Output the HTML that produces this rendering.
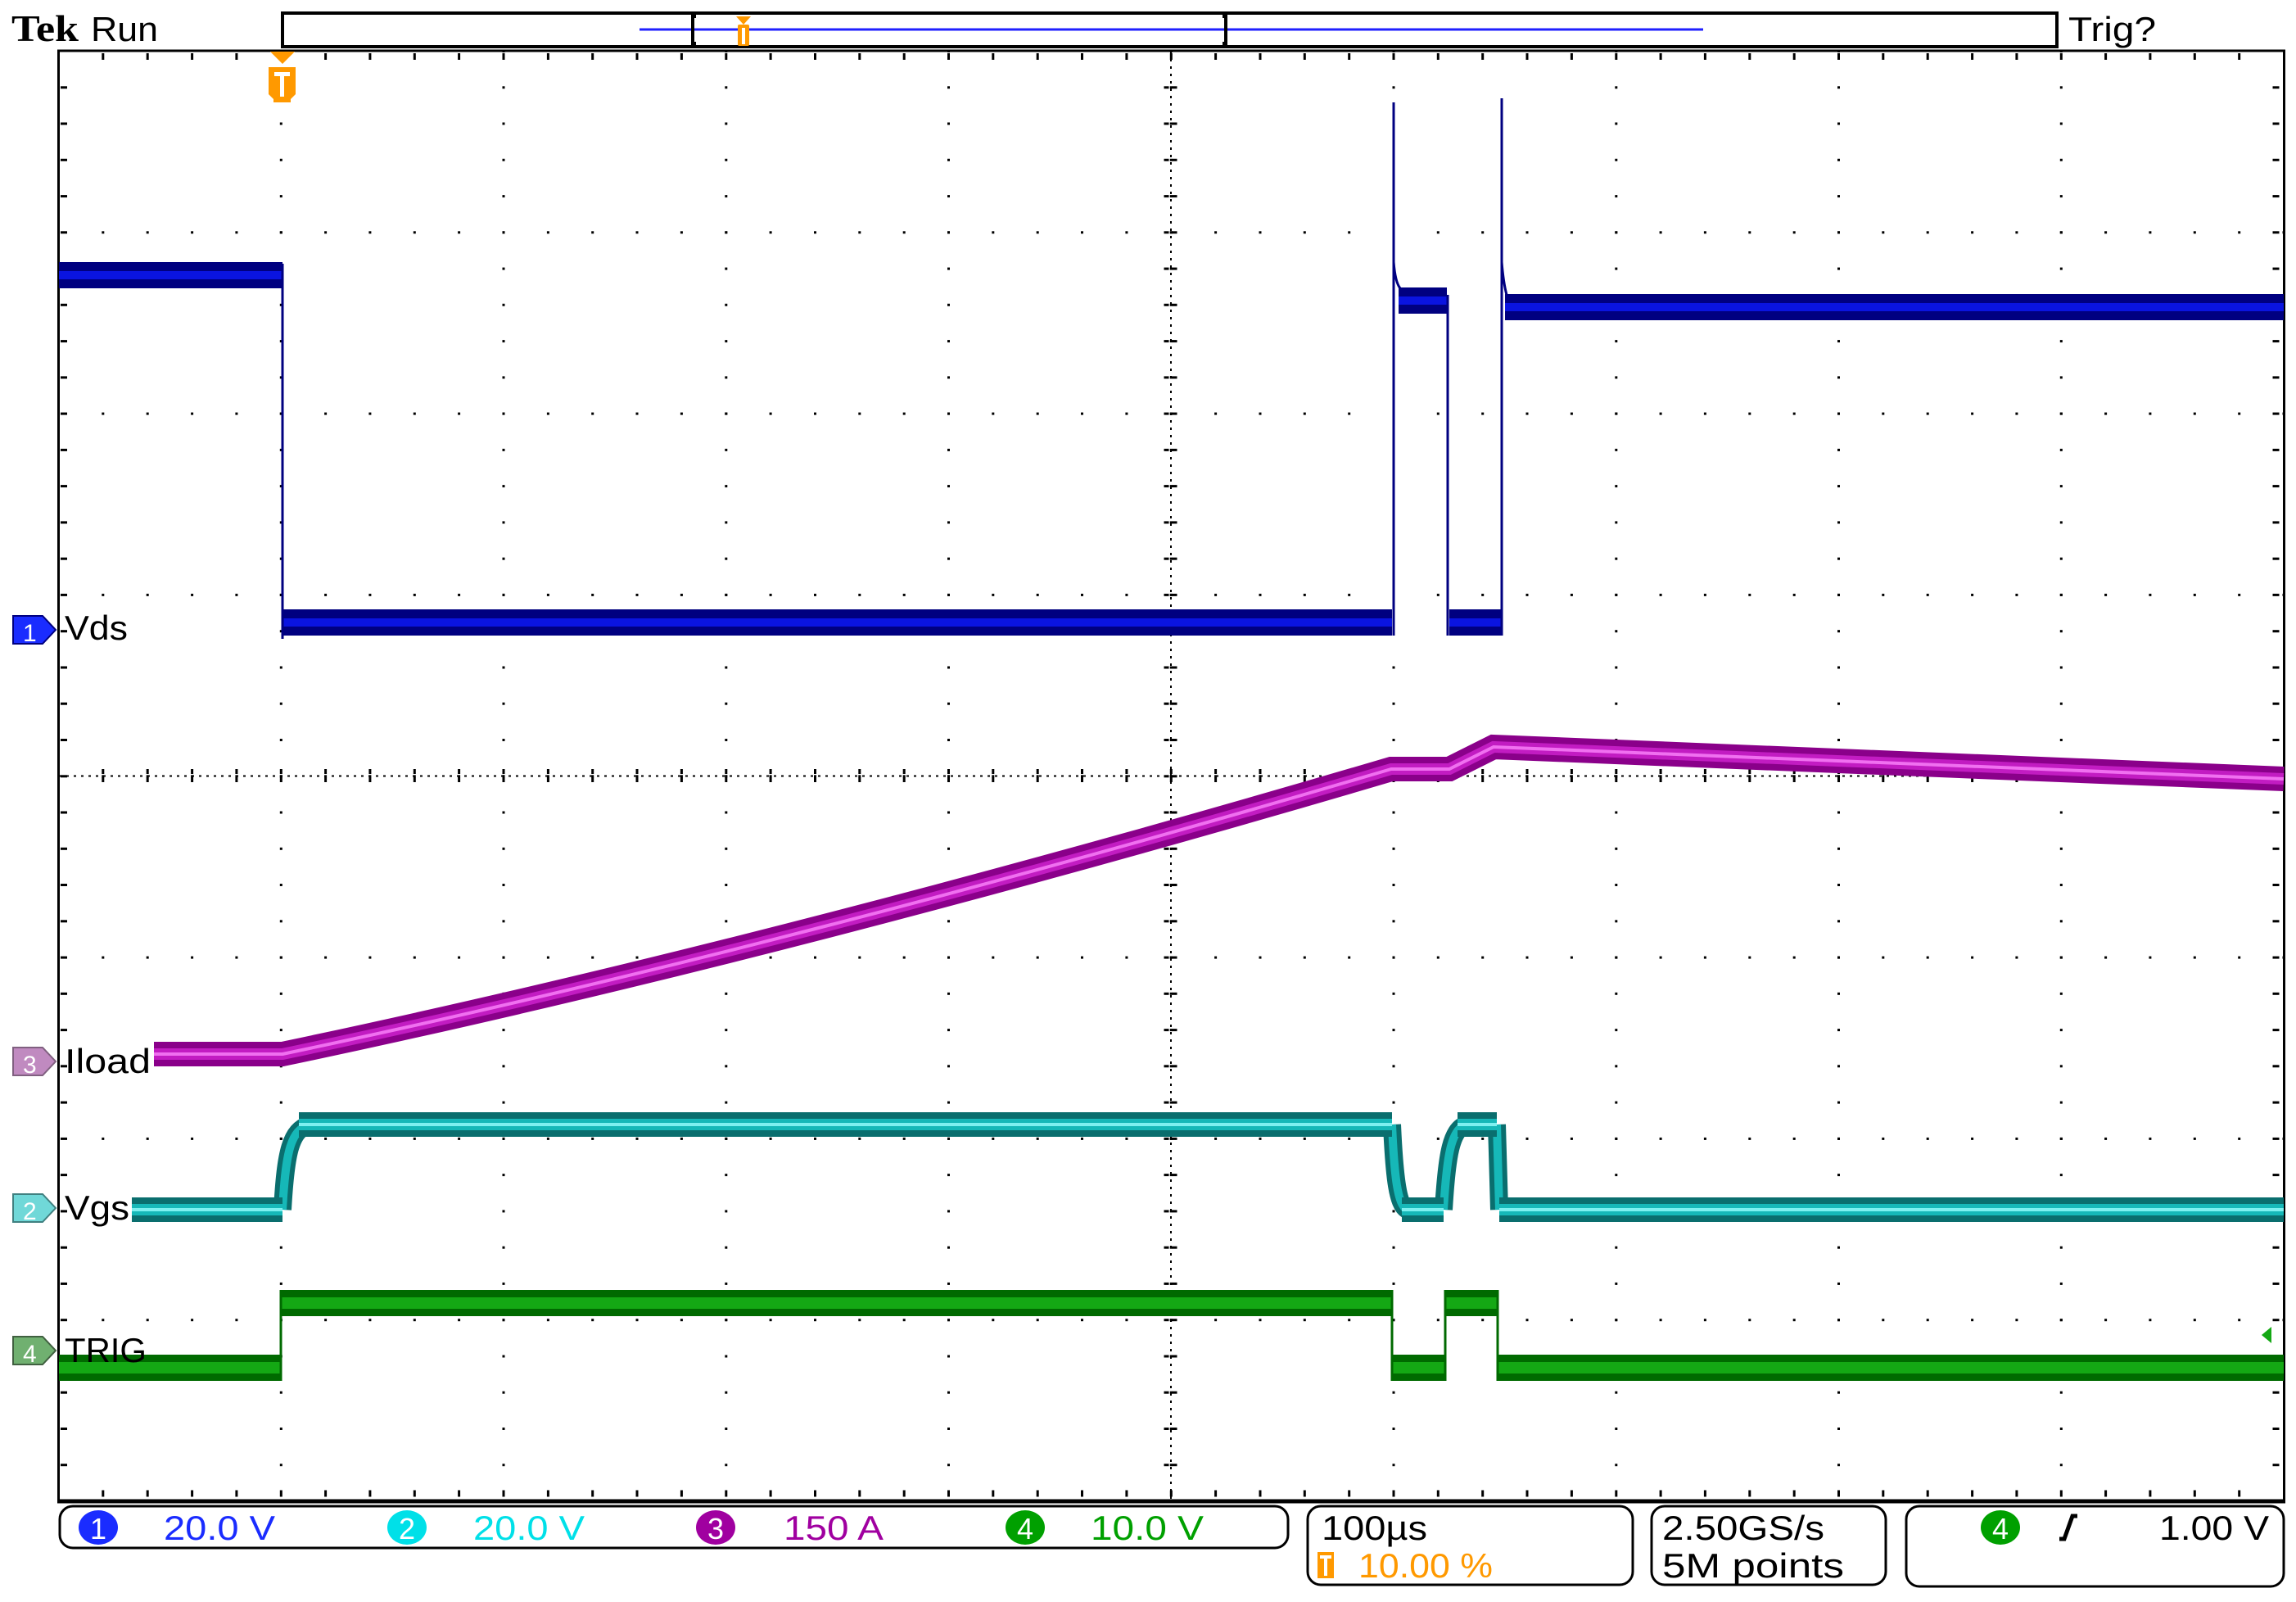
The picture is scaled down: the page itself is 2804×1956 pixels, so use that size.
<!DOCTYPE html>
<html><head><meta charset="utf-8"><style>
html,body{margin:0;padding:0;background:#fff;}
svg{display:block}
text{font-family:"Liberation Sans Narrow","Liberation Sans",sans-serif;}
</style></head><body>
<svg id="s" width="2804" height="1956" viewBox="0 0 2804 1956" xmlns="http://www.w3.org/2000/svg">
<rect width="2804" height="1956" fill="#fff"/>
<g id="grid" fill="#000"></g>
<rect x="71.5" y="62" width="2718" height="1771" fill="none" stroke="#000" stroke-width="3"/>
<line x1="70" y1="1833" x2="2791" y2="1833" stroke="#000" stroke-width="5"/>
<line x1="72" y1="947.5" x2="2789" y2="947.5" stroke="#000" stroke-width="2" stroke-dasharray="3 6"/>
<line x1="1430" y1="63" x2="1430" y2="1833" stroke="#000" stroke-width="2" stroke-dasharray="3 6"/>

<text x="14" y="50" font-weight="bold" font-size="46" textLength="82" lengthAdjust="spacingAndGlyphs" style="font-family:'Liberation Serif',serif">Tek</text>
<text x="111" y="50" font-size="42" textLength="82" lengthAdjust="spacingAndGlyphs">Run</text>
<rect x="345" y="16" width="2167" height="41" fill="none" stroke="#000" stroke-width="4"/>
<line x1="781" y1="36" x2="2080" y2="36" stroke="#2020ff" stroke-width="3"/>
<path d="M850 20 h-4 v33 h4 M1493 20 h4 v33 h-4" fill="none" stroke="#000" stroke-width="4"/>
<path d="M899 20 h18 l-9 10 z" fill="#ff9900"/>
<rect x="901" y="30" width="14" height="26" rx="2" fill="#ff9900"/>
<rect x="906" y="34" width="4" height="20" fill="#fff"/>
<text x="2526" y="50" font-size="42" textLength="107" lengthAdjust="spacingAndGlyphs">Trig?</text>

<path d="M330 63 h30 l-15 15 z" fill="#ff9900"/>
<path d="M328 82 h33 v33 l-6 6 v4 h-21 v-4 l-6 -6 z" fill="#ff9900"/>
<path d="M335 88 h19 v5 h-7 v25 h-5 v-25 h-7 z" fill="#fff"/>

<g fill="none">
<path d="M72 336 H345 M345 760 H1700 M1708 367 H1767 M1770 760 H1833 M1838 375 H2789" stroke="#000080" stroke-width="32"/>
<path d="M72 336 H345 M345 760 H1700 M1708 367 H1767 M1770 760 H1833 M1838 375 H2789" stroke="#0a14e0" stroke-width="10"/>
<path d="M345 322 V780 M1702 125 V776 M1702 320 Q1704 345 1710 352 M1768 360 V776 M1834 120 V776 M1834 320 Q1836 345 1840 360" stroke="#000080" stroke-width="3"/>
</g>

<g fill="none">
<path d="M188 1287 H345 Q950 1160 1699 939 L1770 939 L1824 912 Q2300 930 2789 951" stroke="#8a008a" stroke-width="30"/>
<path d="M188 1287 H345 Q950 1160 1699 939 L1770 939 L1824 912 Q2300 930 2789 951" stroke="#c21cc2" stroke-width="14"/>
<path d="M188 1287 H345 Q950 1160 1699 939 L1770 939 L1824 912 Q2300 930 2789 951" stroke="#f070f0" stroke-width="4"/>
</g>

<g fill="none">
<path d="M345 1477 C349 1405 355 1380 378 1373 M1700 1373 C1703 1440 1707 1470 1718 1477 M1763 1477 C1767 1410 1772 1380 1790 1373 M1828 1373 L1831 1477" stroke="#0a6e6e" stroke-width="22"/>
<path d="M345 1477 C349 1405 355 1380 378 1373 M1700 1373 C1703 1440 1707 1470 1718 1477 M1763 1477 C1767 1410 1772 1380 1790 1373 M1828 1373 L1831 1477" stroke="#16b8b8" stroke-width="10"/>
<path d="M161 1477 H345 M365 1373 H1700 M1712 1477 H1763 M1780 1373 H1828 M1831 1477 H2789" stroke="#0a6e6e" stroke-width="30"/>
<path d="M161 1477 H345 M365 1373 H1700 M1712 1477 H1763 M1780 1373 H1828 M1831 1477 H2789" stroke="#16b8b8" stroke-width="14"/>
<path d="M161 1477 H345 M365 1373 H1700 M1712 1477 H1763 M1780 1373 H1828 M1831 1477 H2789" stroke="#7ef0f0" stroke-width="4"/>
</g>

<g fill="none">
<path d="M72 1670 H343 M343 1591 H1700 M1700 1670 H1765 M1765 1591 H1829 M1829 1670 H2789" stroke="#006a00" stroke-width="32"/>
<path d="M72 1670 H343 M343 1591 H1700 M1700 1670 H1765 M1765 1591 H1829 M1829 1670 H2789" stroke="#14a814" stroke-width="14"/>
<path d="M343 1575 V1686 M1700 1575 V1686 M1765 1575 V1686 M1829 1575 V1686" stroke="#006a00" stroke-width="3"/>
</g>
<path d="M2774 1620 l-12 10 l12 10 z" fill="#14a814"/>

<g font-size="42">
<path d="M16 752 h36 l16 17 l-16 17 h-36 z" fill="#1a2cff" stroke="#000080" stroke-width="2"/>
<text x="28" y="783" font-size="30" fill="#fff">1</text>
<text x="79" y="781" textLength="77" lengthAdjust="spacingAndGlyphs">Vds</text>
<path d="M16 1279 h36 l16 17 l-16 17 h-36 z" fill="#c08ac0" stroke="#806080" stroke-width="2"/>
<text x="28" y="1310" font-size="30" fill="#fff">3</text>
<text x="79" y="1310" textLength="105" lengthAdjust="spacingAndGlyphs">Iload</text>
<path d="M16 1458 h36 l16 17 l-16 17 h-36 z" fill="#70d8d8" stroke="#408080" stroke-width="2"/>
<text x="28" y="1489" font-size="30" fill="#fff">2</text>
<text x="79" y="1489" textLength="79" lengthAdjust="spacingAndGlyphs">Vgs</text>
<path d="M16 1632 h36 l16 17 l-16 17 h-36 z" fill="#70b070" stroke="#406040" stroke-width="2"/>
<text x="28" y="1663" font-size="30" fill="#fff">4</text>
<text x="79" y="1663" textLength="100" lengthAdjust="spacingAndGlyphs">TRIG</text>
</g>

<g fill="none" stroke="#000">
<rect x="73" y="1839" width="1500" height="51" rx="16" stroke-width="3"/>
<rect x="1597" y="1839" width="397" height="96" rx="16" stroke-width="3"/>
<rect x="2017" y="1839" width="286" height="96" rx="16" stroke-width="3"/>
<rect x="2328" y="1839" width="461" height="98" rx="16" stroke-width="3"/>
</g>
<g font-size="42">
<ellipse cx="120" cy="1865" rx="24" ry="21" fill="#1a2cff"/>
<text x="120" y="1879" text-anchor="middle" font-size="36" fill="#fff">1</text>
<text x="200" y="1880" fill="#1a2cff" textLength="136" lengthAdjust="spacingAndGlyphs">20.0 V</text>
<ellipse cx="497" cy="1865" rx="24" ry="21" fill="#00e0e8"/>
<text x="497" y="1879" text-anchor="middle" font-size="36" fill="#fff">2</text>
<text x="578" y="1880" fill="#00e0e8" textLength="136" lengthAdjust="spacingAndGlyphs">20.0 V</text>
<ellipse cx="874" cy="1865" rx="24" ry="21" fill="#a000a0"/>
<text x="874" y="1879" text-anchor="middle" font-size="36" fill="#fff">3</text>
<text x="957" y="1880" fill="#a000a0" textLength="122" lengthAdjust="spacingAndGlyphs">150 A</text>
<ellipse cx="1252" cy="1865" rx="24" ry="21" fill="#00a000"/>
<text x="1252" y="1879" text-anchor="middle" font-size="36" fill="#fff">4</text>
<text x="1332" y="1880" fill="#00a000" textLength="138" lengthAdjust="spacingAndGlyphs">10.0 V</text>
<text x="1614" y="1880" textLength="129" lengthAdjust="spacingAndGlyphs">100µs</text>
<rect x="1609" y="1895" width="20" height="32" fill="#ff9900"/>
<path d="M1612 1899 h14 v4 h-5 v21 h-4 v-21 h-5 z" fill="#fff"/>
<text x="1659" y="1926" fill="#ff9900" textLength="164" lengthAdjust="spacingAndGlyphs">10.00 %</text>
<text x="2030" y="1880" textLength="198" lengthAdjust="spacingAndGlyphs">2.50GS/s</text>
<text x="2030" y="1926" textLength="222" lengthAdjust="spacingAndGlyphs">5M points</text>
<ellipse cx="2443" cy="1865" rx="24" ry="21" fill="#00a000"/>
<text x="2443" y="1879" text-anchor="middle" font-size="36" fill="#fff">4</text>
<path d="M2515 1879 h6 l10 -28 h6" fill="none" stroke="#000" stroke-width="5"/>
<text x="2771" y="1880" text-anchor="end" textLength="134" lengthAdjust="spacingAndGlyphs">1.00 V</text>
</g>
</svg>
<script>
(function(){
var g=document.getElementById('grid'),h='';
var x0=71.5,x1=2789,y0=62.5,y1=1833,dx=(x1-x0)/10,dy=(y1-y0)/8;
function d(x,y,w,hh){h+='<rect x="'+(x-1.5).toFixed(1)+'" y="'+(y-1.5).toFixed(1)+'" width="'+(w||3)+'" height="'+(hh||3)+'"/>';}
for(var i=1;i<10;i++){var x=x0+i*dx;for(var j=0;j<=40;j++){d(x,y0+j*dy/5);}}
for(var j=1;j<8;j++){var y=y0+j*dy;for(var i=0;i<=50;i++){d(x0+i*dx/5,y);}}
for(var i=1;i<50;i++){var x=x0+i*dx/5;d(x,y0+4,3,8);d(x,y1-12,3,8);d(x,947.5-7,3,6);d(x,947.5+3,3,6);}
for(var j=1;j<40;j++){var y=y0+j*dy/5;d(x0+4,y,8,3);d(x1-12,y,8,3);d(1430-7,y,6,3);d(1430+3,y,6,3);}
g.innerHTML=h;
})();
</script>
</body></html>
